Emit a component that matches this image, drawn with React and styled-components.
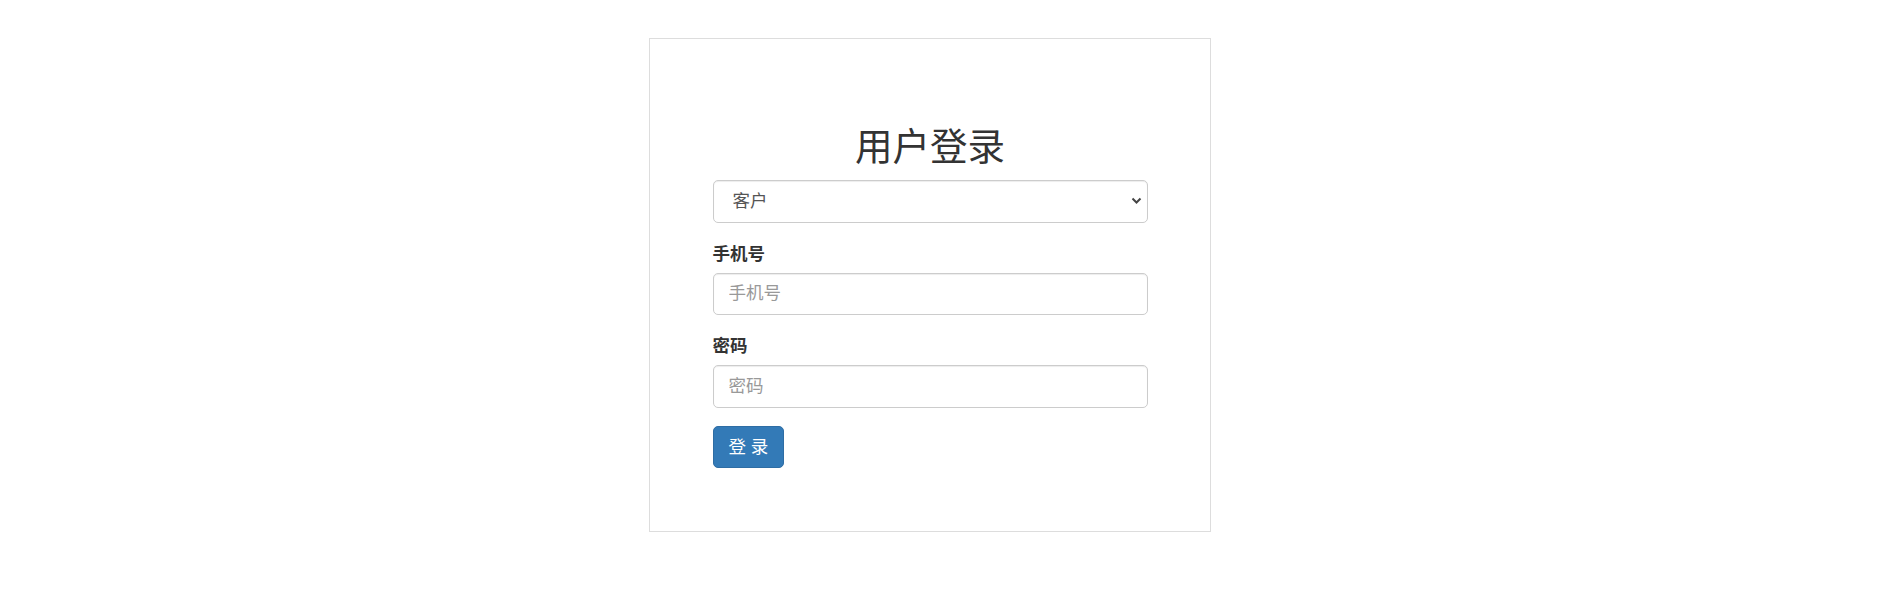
import styled, { createGlobalStyle } from 'styled-components';

const GlobalStyle = createGlobalStyle`
  * {
    box-sizing: border-box;
  }

  body {
    margin: 0;
    background: #fff;
    color: #333;
    font-family: "Liberation Sans", "Noto Sans CJK SC", sans-serif;
    font-size: 17.5px;
    line-height: 1.42857;
  }
`;

const Page = styled.div`
  padding: 38px 0 0 649px;
  height: 600px;
`;

const LoginBox = styled.div`
  width: 562px;
  padding: 62.5px;
  border: 1px solid #ddd;
`;

const Title = styled.h2`
  margin: 25px 0 12.5px;
  font-size: 37.5px;
  font-weight: 400;
  line-height: 1.1;
  text-align: center;
  color: #333;
`;

const FormGroup = styled.div`
  margin-bottom: 18.75px;
`;

const SelectWrap = styled.div`
  position: relative;
`;

const Chevron = styled.svg`
  position: absolute;
  top: 17px;
  right: 6px;
  width: 11px;
  height: 8px;
  pointer-events: none;
`;

const Label = styled.label`
  display: inline-block;
  margin-bottom: 6.25px;
  font-weight: 700;
`;

const fieldStyle = `
  display: block;
  width: 100%;
  height: 42.5px;
  padding: 7.5px 15px;
  font-family: "Liberation Sans", "Noto Sans CJK SC", sans-serif;
  font-size: 17.5px;
  line-height: 1.42857;
  color: #555;
  background-color: #fff;
  border: 1px solid #ccc;
  border-radius: 5px;
  box-shadow: inset 0 1px 1px rgba(0, 0, 0, 0.075);
  outline: none;
`;

const Select = styled.select`
  ${fieldStyle}
  appearance: none;
  -webkit-appearance: none;
  padding-left: 19px;
`;

const Input = styled.input`
  ${fieldStyle}

  &::placeholder {
    color: #999;
  }
`;

const SubmitButton = styled.button`
  display: inline-block;
  padding: 7.5px 15px;
  font-family: "Liberation Sans", "Noto Sans CJK SC", sans-serif;
  font-size: 17.5px;
  line-height: 1.42857;
  color: #fff;
  background-color: #337ab7;
  border: 1px solid #2e6da4;
  border-radius: 5px;
  cursor: pointer;
`;

export default function App() {
  return (
    <>
      <GlobalStyle />
      <Page>
        <LoginBox>
          <Title>用户登录</Title>
          <FormGroup>
            <SelectWrap>
              <Select defaultValue="customer">
                <option value="customer">客户</option>
                <option value="admin">管理员</option>
              </Select>
              <Chevron viewBox="0 0 11 8">
                <path d="M1.5 1.5 L5.5 5.5 L9.5 1.5" fill="none" stroke="#444" strokeWidth="2" />
              </Chevron>
            </SelectWrap>
          </FormGroup>
          <FormGroup>
            <Label htmlFor="phone">手机号</Label>
            <Input id="phone" type="text" placeholder="手机号" />
          </FormGroup>
          <FormGroup>
            <Label htmlFor="password">密码</Label>
            <Input id="password" type="password" placeholder="密码" />
          </FormGroup>
          <SubmitButton type="submit">登 录</SubmitButton>
        </LoginBox>
      </Page>
    </>
  );
}
